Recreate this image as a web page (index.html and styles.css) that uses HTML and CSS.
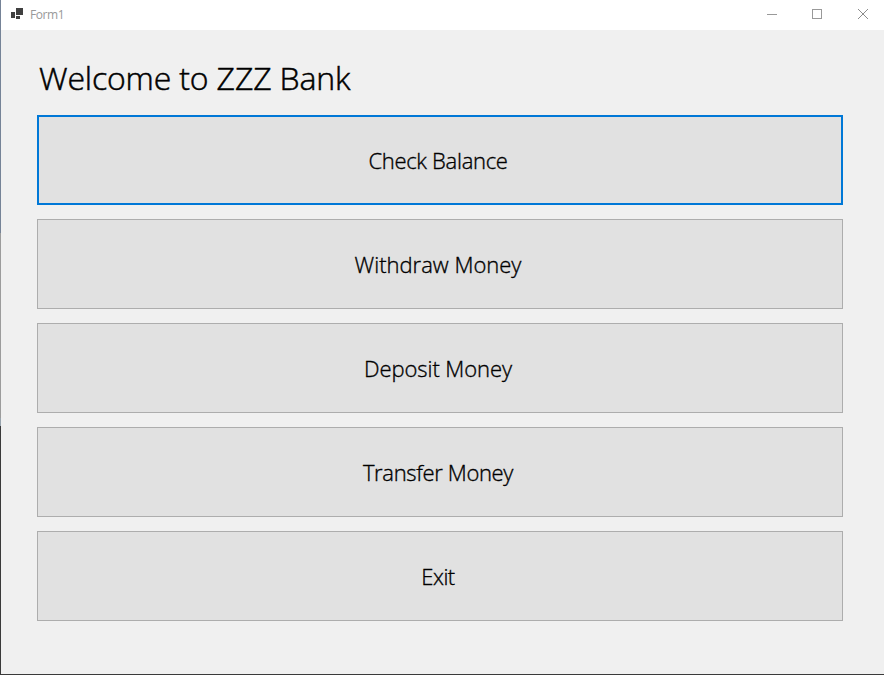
FILE: index.html
```html
<!DOCTYPE html>
<html lang="en">
<head>
<meta charset="utf-8">
<title>Form1</title>
<link rel="stylesheet" href="styles.css">
</head>
<body>
<div class="window">
  <header class="titlebar">
    <svg class="app-icon" width="13" height="12" viewBox="0 0 13 12" shape-rendering="crispEdges"><path fill="#404040" d="M0 4h4v6H0zM5 0h7v7H5zM5 8h4v3H5z"/></svg>
    <span class="caption">Form1</span>
    <div class="controls">
      <svg width="46" height="30" viewBox="0 0 46 30" shape-rendering="crispEdges"><path fill="#999" d="M21 14h10v1H21z"/></svg>
      <svg width="46" height="30" viewBox="0 0 46 30" shape-rendering="crispEdges"><rect x="20.5" y="9.5" width="9" height="9" fill="none" stroke="#999"/></svg>
      <svg width="46" height="30" viewBox="0 0 46 30"><path fill="none" stroke="#8c8c8c" d="M20 9l10 10M30 9l-10 10"/></svg>
    </div>
  </header>
  <main class="form">
    <h1 class="heading">Welcome to ZZZ Bank</h1>
    <div class="actions">
      <button class="action focused"><span class="check">Check Balance</span></button>
      <button class="action"><span class="withdraw">Withdraw Money</span></button>
      <button class="action"><span class="deposit">Deposit Money</span></button>
      <button class="action"><span class="transfer">Transfer Money</span></button>
      <button class="action"><span class="exit">Exit</span></button>
    </div>
  </main>
</div>
</body>
</html>
```
FILE: styles.css
```css
* { box-sizing: border-box; }
body { margin: 0; font-family: "Open Sans", "Noto Sans", sans-serif; color: #000; }
.window {
  width: 884px;
  height: 675px;
  display: flex;
  flex-direction: column;
  padding: 0 0 1px 1px;
  background: linear-gradient(#758397 0 233px, #9c9c9c 233px 418px, #98a4ae 418px 426px, #3a3a3a 426px);
  overflow: hidden;
}
.titlebar { height: 30px; flex: none; display: flex; align-items: flex-start; background: #fff; padding-left: 10px; }
.app-icon { margin-top: 8px; }
.caption { margin-left: 6px; font-size: 12px; line-height: 30px; letter-spacing: -0.4px; color: #999; }
.controls { display: flex; margin-left: auto; }
.form { flex: 1; background: #f0f0f0; padding: 26px 41px 0 36px; }
.heading { margin: 0 0 15px 2px; font-size: 32px; line-height: 44px; font-weight: 350; letter-spacing: -0.15px; white-space: nowrap; -webkit-text-stroke: 0.5px #000; }
.actions { display: flex; flex-direction: column; gap: 14px; }
.action {
  height: 90px;
  padding: 0 4px 0 0;
  border: 1px solid #adadad;
  border-radius: 0;
  background: #e1e1e1;
  font-family: inherit;
  font-size: 22px;
  font-weight: 350;
  line-height: 30px;
  color: #000;
  -webkit-text-stroke: 0.35px #000;
}
.focused { border: 2px solid #0078d7; }
.check { letter-spacing: -0.3px; }
.deposit { letter-spacing: -0.08px; }
.transfer { letter-spacing: -0.35px; }
.exit { letter-spacing: -0.5px; }
```
